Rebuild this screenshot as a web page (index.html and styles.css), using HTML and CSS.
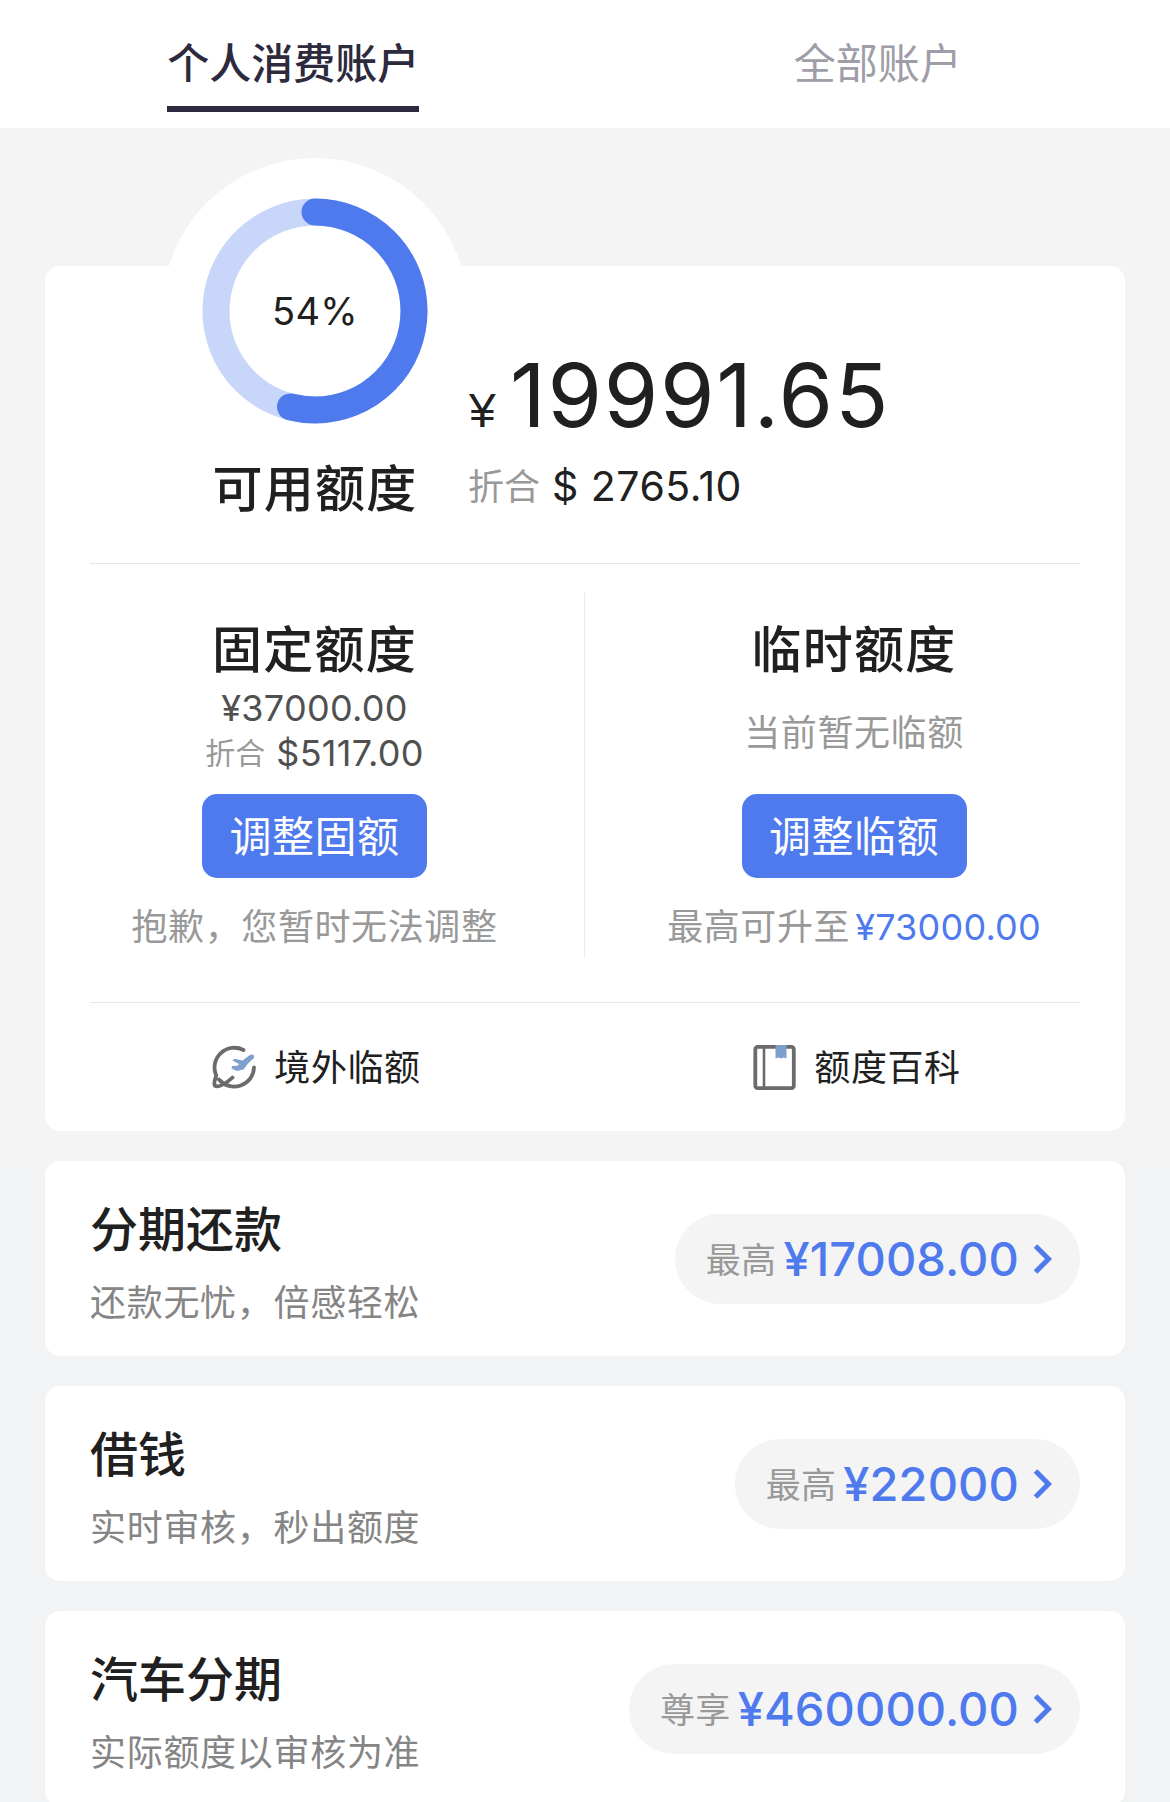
FILE: index.html
```html
<!DOCTYPE html>
<html lang="zh-CN">
  <head>
    <meta charset="utf-8" />
    <title>额度管理</title>
    <link rel="stylesheet" href="styles.css">
  </head>

  <body>
    <nav class="tabs">
      <a class="tab active"><span>个人消费账户</span></a>
      <a class="tab"><span>全部账户</span></a>
    </nav>

    <section class="overview">
      <div class="card quota">
        <div class="available">
          <div class="gauge-col">
            <div class="gauge">
              <svg class="ring" viewBox="0 0 226 226">
                <circle class="ring-track" cx="113" cy="113" r="99" />
                <circle class="ring-value" cx="113" cy="113" r="99" pathLength="100" stroke-dasharray="54 100" transform="rotate(-90 113 113)" />
              </svg>
              <span class="percent">54%</span>
            </div>
            <h2 class="quota-title">可用额度</h2>
          </div>
          <div class="amounts">
            <p class="amount"><span class="yen">¥</span><span class="number">19991.65</span></p>
            <p class="convert"><span class="cn">折合</span><span class="usd">$ 2765.10</span></p>
          </div>
        </div>

        <div class="split">
          <div class="half">
            <h2 class="quota-title">固定额度</h2>
            <p class="fixed-amount">¥37000.00</p>
            <p class="fixed-convert"><span class="cn">折合</span><span class="usd">$5117.00</span></p>
            <button class="btn" type="button">调整固额</button>
            <p class="note">抱歉，您暂时无法调整</p>
          </div>
          <div class="half">
            <h2 class="quota-title">临时额度</h2>
            <p class="empty">当前暂无临额</p>
            <button class="btn" type="button">调整临额</button>
            <p class="note">最高可升至<span class="note-amount">¥73000.00</span></p>
          </div>
        </div>

        <hr class="divider" />

        <div class="links">
          <a class="link">
            <svg class="icon" viewBox="0 0 45 45">
              <path class="line" d="M31.500 5A19.800 19.800 0 0 0 4.200 30.500C3 34 1.500 38 2.800 40.500C5.500 43 14 39 20.500 32.500M7 34.500A19.800 19.800 0 0 0 42 22.500" />
              <path class="plane" d="M42 10.500C40.500 8.500 38 9.500 36.500 11L30.500 15.500L22.500 13.800L20.500 15.500L27 19L25.500 20.700L20 21L19.500 23.500L24.800 26L31.500 24.500L36 18.500L42 13Z" />
            </svg>
            <span>境外临额</span>
          </a>
          <a class="link">
            <svg class="icon" viewBox="0 0 45 45">
              <rect class="line" x="3.300" y="1.900" width="38.500" height="41.300" rx="2.500" />
              <path class="line thin" d="M12 2V43" />
              <path class="mark" d="M23.500 0H34.500V13.500L31.700 12.500L29 13.500L26.300 12.500L23.500 13.500Z" />
            </svg>
            <span>额度百科</span>
          </a>
        </div>
      </div>
    </section>

    <section class="products">
      <div class="card product">
        <div>
          <h3 class="product-name">分期还款</h3>
          <p class="product-desc">还款无忧，倍感轻松</p>
        </div>
        <a class="pill">
          <span class="pill-label">最高</span>
          <span class="pill-amount">¥17008.00</span>
          <svg class="chevron" viewBox="0 0 20 30"><path d="M2.500 2L15.500 15L2.500 28" /></svg>
        </a>
      </div>
      <div class="card product">
        <div>
          <h3 class="product-name">借钱</h3>
          <p class="product-desc">实时审核，秒出额度</p>
        </div>
        <a class="pill">
          <span class="pill-label">最高</span>
          <span class="pill-amount">¥22000</span>
          <svg class="chevron" viewBox="0 0 20 30"><path d="M2.500 2L15.500 15L2.500 28" /></svg>
        </a>
      </div>
      <div class="card product">
        <div>
          <h3 class="product-name">汽车分期</h3>
          <p class="product-desc">实际额度以审核为准</p>
        </div>
        <a class="pill">
          <span class="pill-label">尊享</span>
          <span class="pill-amount">¥460000.00</span>
          <svg class="chevron" viewBox="0 0 20 30"><path d="M2.500 2L15.500 15L2.500 28" /></svg>
        </a>
      </div>
    </section>
  </body>
</html>
```

FILE: styles.css
```css
* {
  box-sizing: border-box;
  margin: 0;
  padding: 0;
}

body {
  height: 1802px;
  overflow: hidden;
  background: #f2f3f5;
  color: #202020;
  font-family: Inter, "Noto Sans CJK SC", sans-serif;
}

/* tabs */
.tabs {
  display: flex;
  height: 128px;
  background: #fff;
}

.tab {
  flex: 1;
  padding-top: 21px;
  text-align: center;
  font-size: 42px;
  line-height: 85px;
  color: #9f9da8;
}

.tab span {
  display: inline-block;
}

.tab.active {
  padding-left: 1px;
  font-weight: 500;
  color: #2c2a3c;
}

.tab.active span {
  border-bottom: 6px solid #2c2a3c;
}

.card {
  background: #fff;
  border-radius: 15px;
}

/* quota card */
.overview {
  padding: 138px 45px 30px;
  background: #f4f4f4;
}

.quota {
  height: 865px;
}

.available {
  display: flex;
  height: 298px;
  margin: 0 45px;
  padding-left: 72px;
  border-bottom: 1px solid #e6e6e6;
}

.gauge-col {
  width: 306px;
  margin-top: -108px;
}

.gauge {
  display: grid;
  place-items: center;
  height: 306px;
  border-radius: 50%;
  background: #fff;
}

.ring,
.percent {
  grid-area: 1 / 1;
}

.ring {
  width: 226px;
  height: 226px;
  fill: none;
  stroke-width: 27;
}

.ring-track {
  stroke: #c8d6f9;
}

.ring-value {
  stroke: #4f7aee;
  stroke-linecap: round;
}

.percent {
  font-size: 38px;
  letter-spacing: 0.4px;
}

.quota-title {
  font-size: 50px;
  font-weight: 500;
  line-height: 50px;
  letter-spacing: 1.2px;
  text-align: center;
}

.amounts {
  padding-top: 84px;
}

.amount {
  display: flex;
  align-items: baseline;
  height: 91px;
  line-height: 91px;
}

.yen {
  width: 41px;
  margin-left: 1px;
  font-family: "Liberation Sans", sans-serif;
  font-size: 48px;
}

.number {
  font-size: 88px;
  letter-spacing: 1.7px;
}

.convert {
  display: flex;
  align-items: center;
  height: 50px;
  margin-top: 20px;
  line-height: 50px;
}

.cn {
  color: #999;
}

.convert .cn {
  margin: 2px 12px 0 0;
  font-size: 36px;
}

.convert .usd {
  font-size: 41px;
  letter-spacing: 0.5px;
}

.split {
  display: flex;
  height: 365px;
  margin: 29px 0 44px;
}

.half {
  width: 540px;
  padding-top: 27px;
  text-align: center;
}

.half:first-child {
  border-right: 1px solid #ebebeb;
}

.half:last-child {
  padding-right: 2px;
}

.half .quota-title {
  line-height: 60px;
}

.fixed-amount,
.fixed-convert {
  height: 45px;
  line-height: 45px;
  font-size: 36px;
  letter-spacing: 0.3px;
  color: #505050;
}

.fixed-amount {
  margin-top: 6px;
}

.fixed-convert {
  display: flex;
  align-items: center;
  justify-content: center;
}

.fixed-convert .cn {
  margin-right: 11px;
  font-size: 30px;
  letter-spacing: 0;
}

.empty {
  height: 90px;
  margin-top: 6px;
  padding-top: 2px;
  line-height: 90px;
  font-size: 36px;
  letter-spacing: 0.6px;
  color: #999;
}

.btn {
  display: block;
  width: 225px;
  height: 84px;
  margin: 18px auto 27px;
  padding-bottom: 6px;
  border: 0;
  border-radius: 15px;
  background: #4f7aee;
  color: #fff;
  font-family: inherit;
  font-size: 42px;
  letter-spacing: 0.5px;
}

.note {
  line-height: 45px;
  font-size: 36px;
  letter-spacing: 0.6px;
  color: #999;
}

.note-amount {
  margin-left: 5px;
  letter-spacing: 0.2px;
  color: #4f7aee;
}

.divider {
  height: 1px;
  margin: 0 45px;
  border: 0;
  background: #e6e6e6;
}

.links {
  display: flex;
  height: 128px;
}

.link {
  display: flex;
  flex: 1;
  align-items: center;
  justify-content: center;
  gap: 17px;
  padding-left: 3px;
  font-size: 36px;
  letter-spacing: 0.6px;
}

.link span {
  margin-top: -4px;
}

.icon {
  width: 45px;
  height: 45px;
}

.line {
  fill: none;
  stroke: #6b6b6b;
  stroke-width: 3.8;
  stroke-linecap: round;
}

.line.thin {
  stroke-width: 2.6;
}

.plane,
.mark {
  fill: #7fa0cd;
}

/* product list */
.products {
  display: flex;
  flex-direction: column;
  gap: 30px;
  padding: 0 45px;
}

.product {
  display: flex;
  flex-shrink: 0;
  align-items: flex-start;
  justify-content: space-between;
  height: 195px;
  padding: 41px 45px 0;
}

.product-name {
  line-height: 56px;
  font-size: 48px;
  font-weight: 500;
}

.product-desc {
  margin-top: 23px;
  line-height: 44px;
  font-size: 36px;
  letter-spacing: 0.7px;
  color: #858585;
}

.pill {
  display: flex;
  align-items: center;
  height: 90px;
  margin-top: 12px;
  padding: 0 27px 0 31px;
  border-radius: 45px;
  background: #f4f4f4;
}

.pill-label {
  margin: -4px 7px 0 0;
  font-size: 35px;
  letter-spacing: 0.3px;
  color: #999;
}

.pill-amount {
  margin-top: -2px;
  font-size: 47px;
  font-weight: 500;
  letter-spacing: 0.1px;
  color: #4f7aee;
}

.chevron {
  width: 20px;
  height: 30px;
  margin-left: 14px;
  fill: none;
  stroke: #4f7aee;
  stroke-width: 5;
}
```
